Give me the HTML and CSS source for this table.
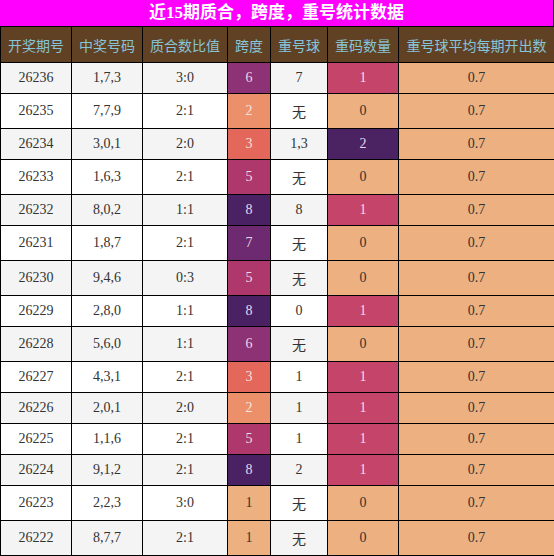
FILE: index.html
```html
<!DOCTYPE html>
<html lang="zh-CN">
<head>
    <meta charset="UTF-8">
    <title>近15期质合，跨度，重号统计数据</title>
    <link rel="stylesheet" href="styles.css">
</head>
<body>
    <div class="title">近15期质合，跨度，重号统计数据</div>
    <table class="stats">
        <colgroup>
            <col class="w-qh"><col class="w-hm"><col class="w-zh"><col class="w-kd"><col class="w-ch"><col class="w-sl"><col class="w-avg">
        </colgroup>
        <thead>
            <tr><th>开奖期号</th><th>中奖号码</th><th>质合数比值</th><th>跨度</th><th>重号球</th><th>重码数量</th><th>重号球平均每期开出数</th></tr>
        </thead>
        <tbody>
            <tr><td>26236</td><td>1,7,3</td><td>3:0</td><td class="k6">6</td><td>7</td><td class="r1">1</td><td class="avg">0.7</td></tr>
            <tr><td>26235</td><td>7,7,9</td><td>2:1</td><td class="k2">2</td><td>无</td><td class="r0">0</td><td class="avg">0.7</td></tr>
            <tr><td>26234</td><td>3,0,1</td><td>2:0</td><td class="k3">3</td><td>1,3</td><td class="r2">2</td><td class="avg">0.7</td></tr>
            <tr><td>26233</td><td>1,6,3</td><td>2:1</td><td class="k5">5</td><td>无</td><td class="r0">0</td><td class="avg">0.7</td></tr>
            <tr><td>26232</td><td>8,0,2</td><td>1:1</td><td class="k8">8</td><td>8</td><td class="r1">1</td><td class="avg">0.7</td></tr>
            <tr><td>26231</td><td>1,8,7</td><td>2:1</td><td class="k7">7</td><td>无</td><td class="r0">0</td><td class="avg">0.7</td></tr>
            <tr><td>26230</td><td>9,4,6</td><td>0:3</td><td class="k5">5</td><td>无</td><td class="r0">0</td><td class="avg">0.7</td></tr>
            <tr><td>26229</td><td>2,8,0</td><td>1:1</td><td class="k8">8</td><td>0</td><td class="r1">1</td><td class="avg">0.7</td></tr>
            <tr><td>26228</td><td>5,6,0</td><td>1:1</td><td class="k6">6</td><td>无</td><td class="r0">0</td><td class="avg">0.7</td></tr>
            <tr><td>26227</td><td>4,3,1</td><td>2:1</td><td class="k3">3</td><td>1</td><td class="r1">1</td><td class="avg">0.7</td></tr>
            <tr><td>26226</td><td>2,0,1</td><td>2:0</td><td class="k2">2</td><td>1</td><td class="r1">1</td><td class="avg">0.7</td></tr>
            <tr><td>26225</td><td>1,1,6</td><td>2:1</td><td class="k5">5</td><td>1</td><td class="r1">1</td><td class="avg">0.7</td></tr>
            <tr><td>26224</td><td>9,1,2</td><td>2:1</td><td class="k8">8</td><td>2</td><td class="r1">1</td><td class="avg">0.7</td></tr>
            <tr><td>26223</td><td>2,2,3</td><td>3:0</td><td class="k1">1</td><td>无</td><td class="r0">0</td><td class="avg">0.7</td></tr>
            <tr><td>26222</td><td>8,7,7</td><td>2:1</td><td class="k1">1</td><td>无</td><td class="r0">0</td><td class="avg">0.7</td></tr>
        </tbody>
    </table>
</body>
</html>
```

FILE: styles.css
```css
/* --- base --- */
:root {
    --peach: #ecb081;
    --line: #000;
    --head-bg: #614124;
    --head-text: #86c4d8;
}
* { box-sizing: border-box; }
body {
    margin: 0;
    width: 554px;
    font-family: "Liberation Serif", "Noto Sans CJK SC", serif;
    font-size: 14px;
    color: #333;
    background: #fff;
}

/* --- title bar --- */
.title {
    height: 26px;
    line-height: 26px;
    background: #ff00ff;
    color: #fff;
    font-size: 17px;
    font-weight: bold;
    text-align: center;
    border-right: 1px solid var(--line);
}

/* --- table --- */
.stats { width: 554px; border-collapse: collapse; table-layout: fixed; }
.w-qh { width: 71px; } .w-hm { width: 71px; } .w-zh { width: 85px; } .w-kd { width: 43px; }
.w-ch { width: 57px; } .w-sl { width: 71px; } .w-avg { width: 156px; }
.stats th, .stats td { border: 1px solid var(--line); text-align: center; padding: 7px 0; font-weight: normal; }
.stats th { padding: 8px 0 7px; background: var(--head-bg); color: var(--head-text); font-family: "Noto Sans CJK SC", sans-serif; }
.stats tbody tr:nth-child(odd) { background: #f4f4f4; }
.stats tbody tr:nth-child(even) { background: #fff; }

/* span colours */
.k1 { background: var(--peach); }
.k2 { background: #ec8f6b; color: #f6e4dc; }
.k3 { background: #e3675a; color: #f6e0dc; }
.k5 { background: #ae386b; color: #f2dbe4; }
.k6 { background: #8d3274; color: #ecd6e4; }
.k7 { background: #6d2a70; color: #e8d6e6; }
.k8 { background: #4a2162; color: #e6d8ea; }

/* repeat count colours */
.r0 { background: var(--peach); }
.r1 { background: #c4446a; color: #f4dce2; }
.r2 { background: #4b2262; color: #e6d8ea; }
.stats td.avg { background: var(--peach); }
```
